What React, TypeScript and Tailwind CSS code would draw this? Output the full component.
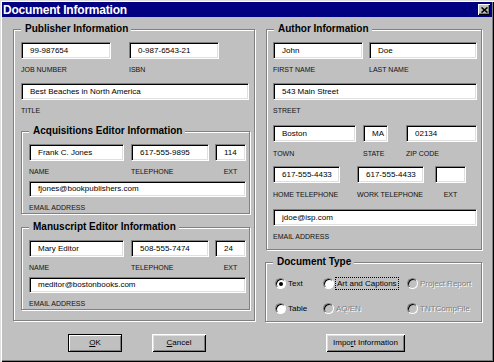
import type { ReactNode } from "react";

const font = "font-['Liberation_Sans',Arial,sans-serif]";
const sunken =
  "bg-white border border-t-[#808080] border-l-[#808080] border-r-white border-b-white shadow-[inset_1px_1px_0_#000,inset_-1px_-1px_0_#dfdfdf]";

function Input({ value = "", className = "" }: { value?: string; className?: string }) {
  return (
    <div className={`h-[17px] flex items-center pl-[8px] text-[8px] text-black whitespace-nowrap overflow-hidden ${sunken} ${className}`}>
      {value}
    </div>
  );
}

function Label({ children, className = "" }: { children: ReactNode; className?: string }) {
  return <div className={`text-[7px] leading-[10px] text-[#111] whitespace-nowrap ${className}`}>{children}</div>;
}

function Field({
  w,
  value,
  label,
  lc = "mt-[6px]",
}: {
  w: string;
  value?: string;
  label: string;
  lc?: string;
}) {
  return (
    <div className="flex flex-col">
      <Input className={w} value={value} />
      <Label className={lc}>{label}</Label>
    </div>
  );
}

function Group({ title, className = "", children }: { title: string; className?: string; children: ReactNode }) {
  return (
    <div className={`relative flex flex-col shrink-0 border border-[#808080] shadow-[inset_1px_1px_0_#fff,1px_1px_0_#fff] ${className}`}>
      <span className="absolute left-[7px] -top-[7px] bg-[#c0c0c0] pl-[4px] pr-[3px] text-[10px] leading-[12px] font-bold text-black whitespace-nowrap">
        {title}
      </span>
      {children}
    </div>
  );
}

function Button({ children, className = "", def = false }: { children: ReactNode; className?: string; def?: boolean }) {
  return (
    <div
      className={`h-[18px] flex items-center justify-center text-[8px] text-black bg-[#c0c0c0] ${
        def
          ? "border border-black shadow-[inset_1px_1px_0_#fff,inset_-1px_-1px_0_#808080]"
          : "shadow-[inset_1px_1px_0_#fff,inset_-1px_-1px_0_#000,inset_2px_2px_0_#dfdfdf,inset_-2px_-2px_0_#808080]"
      } ${className}`}
    >
      {children}
    </div>
  );
}

function Radio({ label, checked = false, disabled = false, focus = false, w = "" }: { label: string; checked?: boolean; disabled?: boolean; focus?: boolean; w?: string }) {
  return (
    <div className={`flex items-center ${w}`}>
      <div
        className={`w-[11px] h-[11px] rounded-full border border-t-[#808080] border-l-[#808080] border-r-white border-b-white shadow-[inset_1px_1px_0_#000] flex items-center justify-center ${
          disabled ? "bg-[#c0c0c0]" : "bg-white"
        }`}
      >
        {checked && <div className="w-[4px] h-[4px] rounded-full bg-black" />}
      </div>
      <span
        className={`ml-[1px] text-[8px] leading-[11px] whitespace-nowrap ${
          disabled ? "text-[#808080] [text-shadow:1px_1px_0_#fff]" : "text-black"
        } ${focus ? "border border-dotted border-black px-[1px]" : "px-[1px]"}`}
      >
        {label}
      </span>
    </div>
  );
}

export default function App() {
  return (
    <div className={`w-[494px] h-[362px] bg-[#c0c0c0] overflow-hidden shadow-[inset_1px_1px_0_#dfdfdf,inset_2px_2px_0_#fff,inset_-1px_-1px_0_#000,inset_-2px_-2px_0_#808080] ${font}`}>
      {/* TITLE BAR */}
      <div className="mx-[2px] pt-[2px]">
        <div className="h-[15px] bg-[#000080] flex items-center justify-between pl-[1px] pr-[2px]">
          <span className="text-white font-bold text-[12px] leading-[12px] tracking-[-0.2px]">Document Information</span>
          <div className="w-[12px] h-[11px] bg-[#c0c0c0] flex items-center justify-center shadow-[inset_1px_1px_0_#fff,inset_-1px_-1px_0_#000,inset_-2px_-2px_0_#808080]">
            <svg width="7" height="6" viewBox="0 0 7 6">
              <path d="M0.5 0.5 L6.5 5.5 M6.5 0.5 L0.5 5.5" stroke="#000" strokeWidth="1.6" />
            </svg>
          </div>
        </div>
      </div>

      {/* BODY */}
      <div className="flex mt-[12px]">
        {/* LEFT */}
        <Group title="Publisher Information" className="ml-[13px] w-[242px] h-[292px] pl-[7px] pt-[12px]">
          <div className="flex gap-[18px]">
            <Field w="w-[90px]" value="99-987654" label="JOB NUMBER" />
            <Field w="w-[90px]" value="0-987-6543-21" label="ISBN" />
          </div>
          <Input className="w-[228px] mt-[8px]" value="Best Beaches in North America" />
          <Label className="mt-[6px]">TITLE</Label>

          <Group title="Acquisitions Editor Information" className="mt-[15px] w-[229px] h-[83px] pl-[7px] pt-[12px]">
            <div className="flex">
              <Field w="w-[95px]" value="Frank C. Jones" label="NAME" />
              <div className="ml-[7px]">
                <Field w="w-[78px]" value="617-555-9895" label="TELEPHONE" />
              </div>
              <div className="ml-[6px]">
                <Field w="w-[31px]" value="114" label="EXT" lc="mt-[6px] text-center" />
              </div>
            </div>
            <Input className="w-[217px] mt-[4px]" value="fjones@bookpublishers.com" />
            <Label className="mt-[6px]">EMAIL ADDRESS</Label>
          </Group>

          <Group title="Manuscript Editor Information" className="mt-[13px] w-[229px] h-[83px] pl-[7px] pt-[12px]">
            <div className="flex">
              <Field w="w-[95px]" value="Mary Editor" label="NAME" />
              <div className="ml-[7px]">
                <Field w="w-[78px]" value="508-555-7474" label="TELEPHONE" />
              </div>
              <div className="ml-[6px]">
                <Field w="w-[31px]" value="24" label="EXT" lc="mt-[6px] text-center" />
              </div>
            </div>
            <Input className="w-[217px] mt-[4px]" value="meditor@bostonbooks.com" />
            <Label className="mt-[6px]">EMAIL ADDRESS</Label>
          </Group>
        </Group>

        {/* RIGHT */}
        <div className="ml-[10px] flex flex-col">
          <Group title="Author Information" className="ml-[1px] w-[216px] h-[221px] pl-[6px] pt-[12px]">
            <div className="flex gap-[6px]">
              <Field w="w-[90px]" value="John" label="FIRST NAME" />
              <Field w="w-[108px]" value="Doe" label="LAST NAME" />
            </div>
            <Input className="w-[204px] mt-[8px]" value="543 Main Street" />
            <Label className="mt-[6px]">STREET</Label>

            <div className="flex mt-[9px]">
              <Field w="w-[83px]" value="Boston" label="TOWN" lc="mt-[7px]" />
              <div className="ml-[7px]">
                <Field w="w-[25px]" value="MA" label="STATE" lc="mt-[7px]" />
              </div>
              <div className="ml-[18px]">
                <Field w="w-[71px]" value="02134" label="ZIP CODE" lc="mt-[7px]" />
              </div>
            </div>

            <div className="flex mt-[7px]">
              <Field w="w-[67px]" value="617-555-4433" label="HOME TELEPHONE" lc="mt-[7px]" />
              <div className="ml-[17px]">
                <Field w="w-[67px]" value="617-555-4433" label="WORK TELEPHONE" lc="mt-[7px]" />
              </div>
              <div className="ml-[11px]">
                <Field w="w-[31px]" label="EXT" lc="mt-[7px] text-center" />
              </div>
            </div>
            <Input className="w-[204px] mt-[9px]" value="jdoe@isp.com" />
            <Label className="mt-[6px]">EMAIL ADDRESS</Label>
          </Group>

          <Group title="Document Type" className="mt-[12px] w-[217px] h-[60px] pl-[9px] pt-[14px]">
            <div className="flex h-[13px] items-center">
              <Radio w="w-[48px]" label="Text" checked />
              <Radio w="w-[84px]" label="Art and Captions" focus />
              <Radio label="Project Report" disabled />
            </div>
            <div className="flex h-[13px] items-center mt-[12px]">
              <Radio w="w-[48px]" label="Table" />
              <Radio w="w-[84px]" label="AQ/EN" disabled />
              <Radio label="TNTCompFile" disabled />
            </div>
          </Group>
        </div>
      </div>

      {/* BUTTONS */}
      <div className="flex mt-[12px]">
        <Button def className="ml-[68px] w-[54px]">
          <span className="underline">O</span>K
        </Button>
        <Button className="ml-[30px] w-[54px]">
          <span className="underline">C</span>ancel
        </Button>
        <Button className="ml-[120px] w-[79px]">
          Impo<span className="underline">r</span>t Information
        </Button>
      </div>
    </div>
  );
}
